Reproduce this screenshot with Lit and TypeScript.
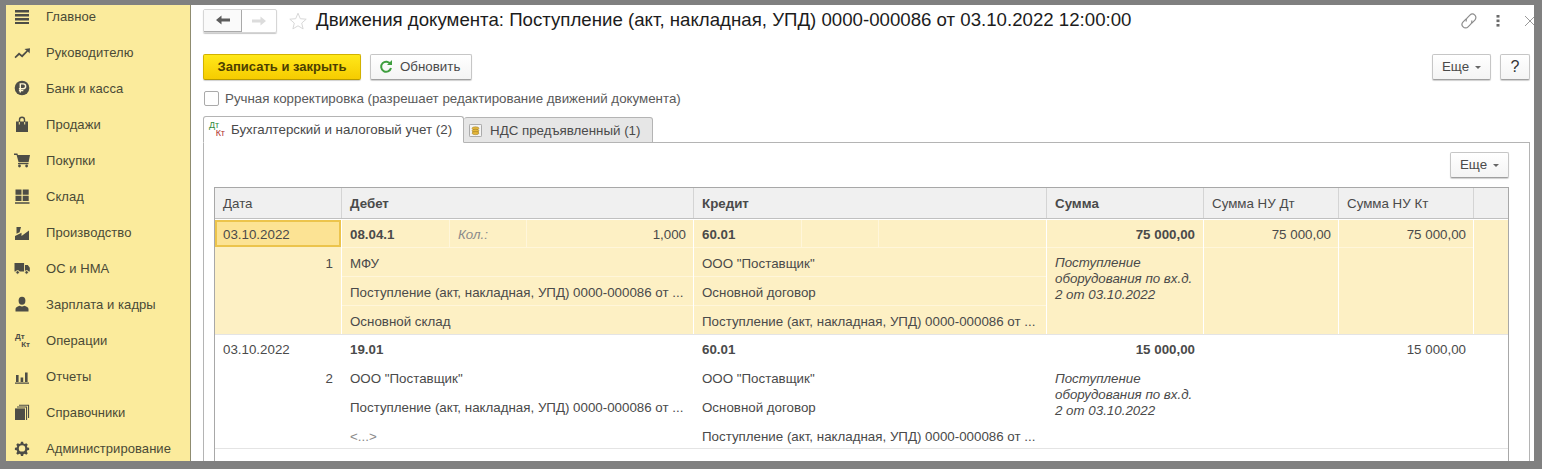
import { LitElement, html, css, svg } from "lit";
import { customElement } from "lit/decorators.js";

const icons: Record<string, unknown> = {
  menu: svg`<path d="M1 2h14v2.400H1zM1 6h14v2.400H1zM1 10h14v2.400H1zM1 14h14v2.400H1z"/>`,
  trend: svg`<path d="M0.500 13 L5 8.500 L8 11 L12.600 6.400 L10.400 5 L16 4.200 L15.600 9.400 L13.900 7.600 L8.200 13.400 L5.200 11 L1.600 14.200 Z"/>`,
  rub: svg`<circle cx="8" cy="8" r="7.300"/><path d="M6.300 12.600V3.900h2.900a2.400 2.400 0 0 1 0 4.900H4.900M4.900 10.600h4.400" fill="none" stroke="#fff6d0" stroke-width="1.400"/>`,
  bag: svg`<path d="M2 5.500h2.800V3.800a3.200 3.200 0 0 1 6.400 0v1.700H14V16H2zM6.200 5.500h3.600V3.800a1.800 1.800 0 0 0-3.600 0z" fill-rule="evenodd"/><path d="M5.300 6v2.500M10.700 6v2.500" stroke="#fbec9e" stroke-width="1"/>`,
  cart: svg`<path d="M0 1.600h3.400l.5 1.400H16l-1.400 7.200H4.600L2.600 3H0z"/><rect x="4" y="11" width="10.500" height="1.200"/><circle cx="5.500" cy="14" r="1.400"/><circle cx="12.600" cy="14" r="1.400"/>`,
  grid: svg`<path d="M1.500 1.500h6v5.200h-6zM8.700 1.500h6v5.200h-6zM1.500 7.800h6V13h-6zM8.700 7.800h6V13h-6zM1 14.200h14.500v1.600H1z"/>`,
  factory: svg`<path d="M1 16V12L7.500 8.800V12L15 6.500V16z"/><path d="M2.500 3H7L5.600 8.200 2.500 9.800z"/>`,
  truck: svg`<path d="M0.500 3h9.600v8.600H0.500zM11 5h2.800l2 2.800v3.800H11z"/><circle cx="3.600" cy="12.400" r="1.800" stroke="#fbec9e"/><circle cx="12.600" cy="12.400" r="1.800" stroke="#fbec9e"/>`,
  person: svg`<ellipse cx="8" cy="4.800" rx="3.400" ry="4"/><path d="M1.500 15.500v-2.600c0-1.600 2.400-2.600 4.200-3.200 1.400 1 3.200 1 4.600 0 1.800.6 4.200 1.600 4.200 3.200v2.600z"/>`,
  bars: svg`<path d="M2 7h2.600v7H2zM6.600 9.400h2.600V14H6.600zM11 4.600h2.600V14H11zM1 14.600h14v1.200H1z"/>`,
  books: svg`<path d="M1 4.400h10V16H1z"/><path d="M12 3.200h1.100V16H12zM3 2.600h10V3.600H3zM14 1h1.100v13H14zM5 0.800h10v1H5z"/>`,
  gear: svg`<g transform="translate(.9 .9) scale(.89)"><path fill-rule="evenodd" d="M6.800 1h2.400l.4 2 1.500.6 1.700-1.100 1.700 1.700-1.100 1.700.6 1.500 2 .4v2.400l-2 .4-.6 1.500 1.100 1.700-1.700 1.700-1.700-1.100-1.500.6-.4 2H6.800l-.4-2-1.500-.6-1.700 1.100-1.700-1.700 1.100-1.700-.6-1.500-2-.4V7.800l2-.4.6-1.500-1.100-1.700 1.700-1.700 1.700 1.100 1.500-.6zM8 4.800a3.600 3.600 0 1 0 0 7.200 3.600 3.600 0 0 0 0-7.200z"/></g>`,
};

const menu: [string, string][] = [
  ["menu", "Главное"], ["trend", "Руководителю"], ["rub", "Банк и касса"], ["bag", "Продажи"],
  ["cart", "Покупки"], ["grid", "Склад"], ["factory", "Производство"], ["truck", "ОС и НМА"],
  ["person", "Зарплата и кадры"], ["dtkt", "Операции"], ["bars", "Отчеты"], ["books", "Справочники"],
  ["gear", "Администрирование"],
];

const DOC = "Поступление (акт, накладная, УПД) 0000-000086 от ...";

interface Entry {
  cls: string; n: string; date: string; selected: boolean;
  deb: string; qty?: [string, string]; deb2: string; deb3: string; deb4: string; empty4?: boolean;
  kr2: string; kr3: string; kr4: string;
  sum: string; nuD: string; nuK: string;
}
const rows: Entry[] = [
  { cls: "sel", n: "1", date: "03.10.2022", selected: true, deb: "08.04.1", qty: ["Кол.:", "1,000"],
    deb2: "МФУ", deb3: DOC, deb4: "Основной склад",
    kr2: 'ООО "Поставщик"', kr3: "Основной договор", kr4: DOC,
    sum: "75 000,00", nuD: "75 000,00", nuK: "75 000,00" },
  { cls: "plain", n: "2", date: "03.10.2022", selected: false, deb: "19.01",
    deb2: 'ООО "Поставщик"', deb3: DOC, deb4: "<...>", empty4: true,
    kr2: 'ООО "Поставщик"', kr3: "Основной договор", kr4: DOC,
    sum: "15 000,00", nuD: "", nuK: "15 000,00" },
];

@customElement("app-root")
export class AppRoot extends LitElement {
  static styles = css`
    :host { display: block; width: 1542px; height: 469px; box-sizing: border-box; background: #808080;
      padding: 5px 8px 8px 6px; font: 13.33px "Liberation Sans", Arial, sans-serif; color: #4a4a4a; overflow: hidden; }
    .shell { display: flex; height: 456px; background: #fff; overflow: hidden; }
    .side { width: 184px; flex: none; background: #fbeb9c; border-right: 1px solid #8f8c70; overflow: hidden; }
    .side-list { margin-top: -7px; }
    .item { height: 36px; display: flex; align-items: center; padding-left: 8px; gap: 16px; color: #4a4a36; font-size: 13px; letter-spacing: 0.06px; }
    .ico { width: 16px; height: 16px; fill: #4d4d46; flex: none; }
    .dk { width: 16px; height: 16px; flex: none; display: grid; row-gap: 1px; padding-left: 1px; box-sizing: border-box; align-content: center; font: bold 8px/7px "Liberation Sans", sans-serif; color: #4d4d46; letter-spacing: 0; }
    .dk span:last-child { justify-self: end; }
    .main { flex: 1; min-width: 0; padding: 3px 4px 0 12px; display: flex; flex-direction: column; }
    .head { display: flex; align-items: center; height: 25px; }
    .nav { display: flex; width: 74px; height: 24px; box-sizing: border-box; border: 1px solid #d6d6d6; border-radius: 2px; box-shadow: 0 1px 1px #c8c8c8; }
    .nav div { flex: 1; display: flex; align-items: center; justify-content: center; }
    .nav div:first-child { flex: none; width: 37px; border-right: 1px solid #aaa; border-bottom: 1px solid #aaa; background: #fafafa; }
    .star { margin: 1px 9px 0 12px; width: 18px; height: 18px; flex: none; }
    h1 { margin: 0 0 2px; font-weight: normal; font-size: 18.67px; color: #1c1c1c; white-space: nowrap; }
    .head-r { margin-left: auto; margin-right: -6px; display: flex; align-items: center; }
    .dots { margin-left: 18px; }
    .close { margin-left: 24px; }
    .bar { display: flex; align-items: center; margin-top: 21px; gap: 9px; }
    .btn { box-sizing: border-box; height: 26px; padding-bottom: 1px; display: inline-flex; align-items: center; justify-content: center; border: 1px solid #c6c6c6; border-bottom-color: #a0a0a0; border-radius: 2px;
      background: linear-gradient(#ffffff, #f4f4f4); box-shadow: 0 1px 1px #d0d0d0; color: #4a4a4a; }
    .primary { width: 158px; background: linear-gradient(#ffe81a, #f6cc00); border-color: #d2b200; border-bottom-color: #b89b00; color: #4c3f00; font-weight: bold; font-size: 13px; }
    .refresh { width: 102px; gap: 7px; justify-content: flex-start; padding-left: 8px; }
    .more { width: 59px; gap: 6px; }
    .help { width: 30px; font-size: 16px; color: #333; }
    .spacer { flex: 1; }
    .caret { width: 0; height: 0; border: 3px solid transparent; border-top: 3px solid #666; border-bottom: 0; margin-top: 2px; }
    .check { display: flex; align-items: center; gap: 6px; margin-top: 9px; margin-left: 1px; height: 18px; color: #5a5a5a; }
    .box { width: 15px; height: 15px; box-sizing: border-box; border: 1px solid #aaa; border-radius: 2px; background: #fff; }
    .tabs { display: flex; margin-top: 9px; height: 27px; position: relative; z-index: 1; margin-bottom: -1px; }
    .tab { box-sizing: border-box; display: flex; align-items: center; border: 1px solid #b4b4b4; border-radius: 3px 3px 0 0; }
    .tab.on { width: 261px; background: #fff; border-bottom-color: #fff; padding-left: 5px; gap: 6px; }
    .tab.off { width: 189px; margin-top: 1px; background: #e6e6e6; border-left: 0; padding-left: 5px; gap: 8px; }
    .tabdk { width: 16px; height: 15px; display: grid; align-content: start; row-gap: 1px; font: 9px/7px "Liberation Sans", sans-serif; color: #2f8a3c; flex: none; letter-spacing: 0; }
    .tabdk span:last-child { justify-self: end; color: #b03030; }
    .panel { flex: 1; min-height: 0; box-sizing: border-box; border: 1px solid #b4b4b4; border-bottom: 0; padding: 9px 20px 0 10px; display: flex; flex-direction: column; }
    .ptools { display: flex; justify-content: flex-end; height: 26px; flex: none; }
    .table { margin-top: 9px; flex: 1; box-sizing: border-box; border: 1px solid #a8a8a8; border-bottom: 0; min-height: 0; }
    .grid { display: grid; grid-template-columns: 127px 352px 353px 157px 135px 135px 34px; }
    .hdr { height: 31px; box-sizing: border-box; border-bottom: 1px solid #c0c0c0; background: #f0f0f0; }
    .hdr > div { display: flex; align-items: center; padding-left: 8px; border-right: 1px solid #d4d4d4; }
    .hdr > div:last-child { border-right: 0; }
    .b { font-weight: bold; }
    .row { border-bottom: 1px solid #e4e4e4; padding-top: 1px; }
    .row.sel { background: #fdf0c4; box-shadow: inset 0 1px 0 #fff; }
    .row > div { border-right: 1px solid transparent; min-width: 0; }
    .row.sel > div { border-right-color: #fff; }
    .row > div:last-child { border-right: 0; }
    .c { display: flex; align-items: center; padding: 2px 8px 0; white-space: nowrap; overflow: hidden; box-sizing: border-box; height: 29px; border-bottom: 1px solid transparent; }
    .sel .c { border-bottom-color: #fff6da; }
    .c.l1 { height: 28px; }
    .c.l4 { height: 28px; border-bottom: 0; }
    .plain .c.l1, .plain .split .c { height: 27px; padding-top: 0; }
    .plain .c.l4 { height: 27px; padding-top: 4px; }
    .r { justify-content: flex-end; padding-right: 7px; }
    .c.b.r { padding-right: 8px; }
    .i { font-style: italic; }
    .muted { color: #8a8a8a; }
    .split { display: grid; grid-template-columns: 107px 77px 1fr; }
    .split .c { height: 28px; }
    .split .c + .c { border-left: 1px solid transparent; }
    .sel .split .c + .c { border-left-color: #fff6da; }
    .c.l1.date-on { background: #fce394; border: 2px solid #ecc44c; height: 27px; padding-left: 6px; margin-bottom: 1px; }
    .note { padding: 7px 8px 0; line-height: 16px; font-style: italic; }
    .plain .note { padding-top: 8px; }
    .num { height: 29px; padding: 2px 8px 0 0; box-sizing: border-box; display: flex; align-items: center; justify-content: flex-end; }
  `;

  private ico(name: string) {
    if (name === "dtkt") return html`<div class="dk"><span>Дт</span><span>Кт</span></div>`;
    return html`<svg class="ico" viewBox="0 0 16 16">${icons[name]}</svg>`;
  }

  private row(r: Entry) {
    return html`<div class="grid row ${r.cls}">
      <div>
        <div class="c l1 ${r.selected ? "date-on" : ""}">${r.date}</div>
        <div class="num">${r.n}</div>
      </div>
      <div>
        <div class="split">
          <div class="c b">${r.deb}</div>
          <div class="c i muted">${r.qty ? r.qty[0] : ""}</div>
          <div class="c r">${r.qty ? r.qty[1] : ""}</div>
        </div>
        <div class="c">${r.deb2}</div>
        <div class="c">${r.deb3}</div>
        <div class="c l4 ${r.empty4 ? "muted" : ""}">${r.deb4}</div>
      </div>
      <div>
        <div class="split">
          <div class="c b">60.01</div><div class="c"></div><div class="c"></div>
        </div>
        <div class="c">${r.kr2}</div>
        <div class="c">${r.kr3}</div>
        <div class="c l4">${r.kr4}</div>
      </div>
      <div>
        <div class="c l1 r b">${r.sum}</div>
        <div class="note">Поступление<br />оборудования по вх.д.<br />2 от 03.10.2022</div>
      </div>
      <div><div class="c l1 r">${r.nuD}</div></div>
      <div><div class="c l1 r">${r.nuK}</div></div>
      <div></div>
    </div>`;
  }

  render() {
    return html`<div class="shell">
      <aside class="side"><div class="side-list">
        ${menu.map(([i, t]) => html`<div class="item">${this.ico(i)}<span>${t}</span></div>`)}
      </div></aside>
      <section class="main">
        <div class="head">
          <div class="nav">
            <div><svg width="14" height="10" viewBox="0 0 14 10"><path d="M0 5 5.500 0.500V3.500H14V6.500H5.500V9.500Z" fill="#5c5c5c"/></svg></div>
            <div><svg width="14" height="10" viewBox="0 0 14 10"><path d="M14 5 8.500 0.500V3.500H0V6.500H8.500V9.500Z" fill="#dcdcdc"/></svg></div>
          </div>
          <svg class="star" viewBox="0 0 18 18"><path d="M9 1.200 11.300 6.700 17.200 7.200 12.700 11.100 14.100 16.900 9 13.800 3.900 16.900 5.300 11.100 0.800 7.200 6.700 6.700Z" fill="none" stroke="#d8d8d8"/></svg>
          <h1>Движения документа: Поступление (акт, накладная, УПД) 0000-000086 от 03.10.2022 12:00:00</h1>
          <div class="head-r">
            <svg width="18" height="18" viewBox="0 0 18 18" fill="none" stroke="#8c8c8c" stroke-width="1.200"><g transform="rotate(-45 9 9)"><path d="M8.500 5.500H4.200a3.500 3.500 0 0 0 0 7H8a3.500 3.500 0 0 0 3.200-2"/><path d="M9.500 12.500h4.300a3.500 3.500 0 0 0 0-7H10a3.500 3.500 0 0 0-3.200 2"/></g></svg>
            <svg class="dots" width="4" height="12" viewBox="0 0 4 12" fill="#6a6a6a"><rect x="0.500" y="0" width="3" height="2.600"/><rect x="0.500" y="4.500" width="3" height="2.600"/><rect x="0.500" y="9" width="3" height="2.600"/></svg>
            <svg class="close" width="12" height="12" viewBox="0 0 12 12" stroke="#999" stroke-width="1" fill="none"><path d="M1 1 11 11M11 1 1 11"/></svg>
          </div>
        </div>
        <div class="bar">
          <div class="btn primary">Записать и закрыть</div>
          <div class="btn refresh">
            <svg width="14" height="14" viewBox="0 0 14 14" fill="none"><path d="M11.500 4.200A5 5 0 1 0 12 8" stroke="#3f9e3f" stroke-width="2"/><path d="M8 5h5V0z" fill="#3f9e3f"/></svg>
            <span>Обновить</span>
          </div>
          <div class="spacer"></div>
          <div class="btn more"><span>Еще</span><i class="caret"></i></div>
          <div class="btn help">?</div>
        </div>
        <div class="check"><div class="box"></div><span>Ручная корректировка (разрешает редактирование движений документа)</span></div>
        <div class="tabs">
          <div class="tab on"><div class="tabdk"><span>Дт</span><span>Кт</span></div><span>Бухгалтерский и налоговый учет (2)</span></div>
          <div class="tab off">
            <svg width="13" height="13" viewBox="0 0 15 15"><rect x="0.500" y="0.500" width="14" height="14" rx="1" fill="#f4f4f4" stroke="#9a9a9a"/><ellipse cx="7.500" cy="5" rx="4" ry="1.800" fill="#e5b73a" stroke="#9a7a20" stroke-width=".6"/><ellipse cx="7.500" cy="7.800" rx="4" ry="1.800" fill="#e5b73a" stroke="#9a7a20" stroke-width=".6"/><ellipse cx="7.500" cy="10.500" rx="4" ry="1.800" fill="#e5b73a" stroke="#9a7a20" stroke-width=".6"/></svg>
            <span>НДС предъявленный (1)</span>
          </div>
        </div>
        <div class="panel">
          <div class="ptools"><div class="btn more"><span>Еще</span><i class="caret"></i></div></div>
          <div class="table">
            <div class="grid hdr">
              <div>Дата</div><div class="b">Дебет</div><div class="b">Кредит</div><div class="b">Сумма</div>
              <div>Сумма НУ Дт</div><div>Сумма НУ Кт</div><div></div>
            </div>
            ${rows.map((r) => this.row(r))}
          </div>
        </div>
      </section>
    </div>`;
  }
}
